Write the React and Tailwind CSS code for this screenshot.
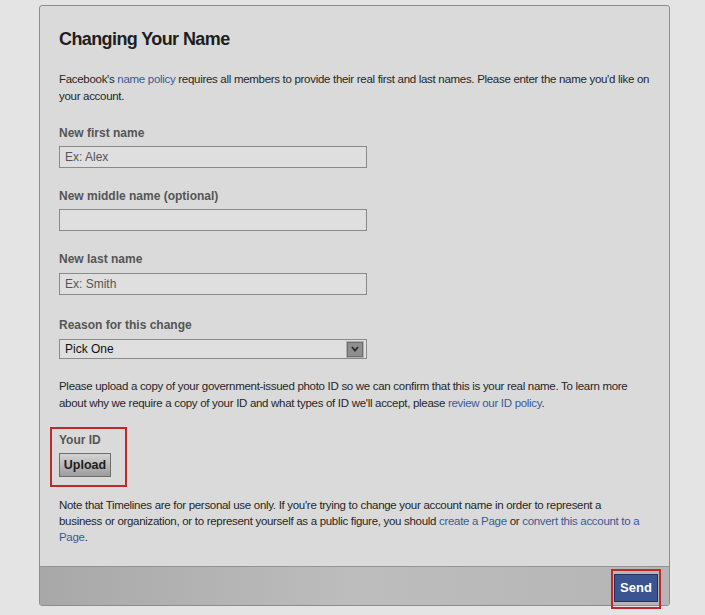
import React from 'react';

const Label = ({ children, className = '' }) => (
  <div className={`text-[12px] leading-[16px] font-bold text-[#555] ${className}`}>{children}</div>
);

const TextBox = ({ placeholder, className = '' }) => (
  <div className={`w-[308px] h-[22px] border border-[#8a8a8a] bg-[#dfdfdf] px-[5px] flex items-center text-[12px] text-[#555] ${className}`}>
    {placeholder}
  </div>
);

const A = ({ children }) => <span className="text-[#3b5998]">{children}</span>;

const body = "text-[11.5px] tracking-[-0.3px] text-[#262626] whitespace-nowrap";

const App = () => {
  return (
    <div className="w-[705px] h-[615px] bg-[#e4e4e4] pt-[5px] pl-[39px] font-['Liberation_Sans',Arial,sans-serif] text-[#333]">
      <div className="w-[631px] h-[601px] border border-[#8d8d8d] rounded-[3px] bg-[#dadada] flex flex-col">
        <div className="flex-1 pl-[19px] pr-[10px]">
          <h1 className="mt-[22px] text-[18px] leading-[22px] font-bold text-[#1e1e1e] tracking-[-0.6px]">Changing Your Name</h1>
          <p className={`mt-[21px] leading-[17px] ${body}`}>
            Facebook's <A>name policy</A> requires all members to provide their real first and last names. Please enter the name you'd like on
            <br />
            your account.
          </p>

          <Label className="mt-[20px]">New first name</Label>
          <TextBox placeholder="Ex: Alex" className="mt-[5px]" />

          <Label className="mt-[20px]">New middle name (optional)</Label>
          <TextBox className="mt-[5px]" />

          <Label className="mt-[20px]">New last name</Label>
          <TextBox placeholder="Ex: Smith" className="mt-[6px]" />

          <Label className="mt-[22px]">Reason for this change</Label>
          <div className="mt-[6px] w-[308px] h-[20px] border border-[#8a8a8a] bg-[#dfdfdf] flex items-center justify-between pl-[5px] pr-[3px] text-[12px] text-[#111]">
            <span>Pick One</span>
            <span className="w-[16px] h-[15px] bg-[#8f8f8f] border border-[#6f6f6f] outline outline-1 outline-[#b0b0b0] flex items-center justify-center">
              <svg width="8" height="6" viewBox="0 0 8 6" fill="none" stroke="#2a2a2a" strokeWidth="1.8">
                <path d="M1 1l3 3.5L7 1" />
              </svg>
            </span>
          </div>

          <p className={`mt-[19px] leading-[17px] ${body}`}>
            Please upload a copy of your government-issued photo ID so we can confirm that this is your real name. To learn more
            <br />
            about why we require a copy of your ID and what types of ID we'll accept, please <A>review our ID policy</A>.
          </p>

          <div className="mt-[15px] -ml-[9px] w-[77px] h-[60px] border-2 border-[#c0282d] pl-[7px] pt-[3px]">
            <div className="text-[12px] leading-[16px] font-bold text-[#555]">Your ID</div>
            <button className="mt-[5px] w-[52px] h-[24px] border border-[#6d6d6d] bg-gradient-to-b from-[#d4d4d4] to-[#9d9d9d] text-[12.5px] font-bold text-[#1d1d1d]">
              Upload
            </button>
          </div>

          <p className={`mt-[10px] leading-[16px] ${body}`}>
            Note that Timelines are for personal use only. If you're trying to change your account name in order to represent a
            <br />
            business or organization, or to represent yourself as a public figure, you should <A>create a Page</A> or <A>convert this account to a</A>
            <br />
            <A>Page</A>.
          </p>
        </div>

        <div className="h-[39px] border-t border-[#939393] bg-gradient-to-r from-[#a8a8a8] via-[#bdbdbd] to-[#b5b5b5] flex justify-end pr-[8px] pt-[2px]">
          <div className="h-[40px] w-[50px] border-2 border-[#c0282d] pt-[3px] pl-[1px] relative z-10">
            <button className="w-[44px] h-[28px] bg-[#3a5490] border border-[#1f3366] text-white font-bold text-[13px]">
              Send
            </button>
          </div>
        </div>
      </div>
    </div>
  );
};

export default App;
